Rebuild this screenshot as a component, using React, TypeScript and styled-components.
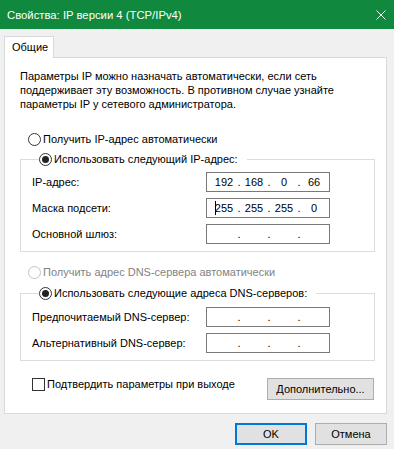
import styled, { createGlobalStyle } from "styled-components";

const GlobalStyle = createGlobalStyle`
  html, body {
    margin: 0;
    padding: 0;
    background: #f0f0f0;
  }
  * {
    box-sizing: border-box;
  }
`;

const FONT = `"Liberation Sans", Arial, sans-serif`;

const Window = styled.div`
  width: 394px;
  height: 449px;
  background: #f0f0f0;
  font-family: ${FONT};
  font-size: 11px;
  color: #000;
  display: flex;
  flex-direction: column;
  overflow: hidden;
`;

const TitleBar = styled.div`
  height: 29px;
  background: #10893e;
  color: #fff;
  display: flex;
  align-items: center;
  justify-content: space-between;
  padding: 0 8px 0 7px;
`;

const Title = styled.span`
  font-size: 11.3px;
  line-height: 14px;
`;

const CloseIcon = styled.svg`
  width: 10px;
  height: 10px;
  display: block;
  margin-top: 1px;
`;

const Body = styled.div`
  padding: 7px 7px 0 4px;
  display: flex;
  flex-direction: column;
`;

const TabStrip = styled.div`
  display: flex;
  position: relative;
  z-index: 1;
  margin-bottom: -1px;
`;

const Tab = styled.div`
  width: 50px;
  height: 22px;
  background: #fff;
  border: 1px solid #d9d9d9;
  border-bottom: none;
  display: flex;
  align-items: center;
  padding-left: 7px;
  padding-bottom: 1px;
`;

const TabPanel = styled.div`
  height: 357px;
  background: #fff;
  border: 1px solid #d9d9d9;
  padding: 11px 11px 13px 15px;
  display: flex;
  flex-direction: column;
`;

const Intro = styled.p`
  margin: 0;
  line-height: 14px;
  white-space: nowrap;
`;

const RadioRow = styled.label<{ $disabled?: boolean; $gap?: number }>`
  display: flex;
  align-items: center;
  height: 14px;
  line-height: 14px;
  margin-top: ${(p) => p.$gap ?? 0}px;
  padding-left: 8px;
  color: ${(p) => (p.$disabled ? "#838383" : "#000")};
  white-space: nowrap;
`;

const Radio = styled.span<{ $checked?: boolean; $disabled?: boolean }>`
  width: 13px;
  height: 13px;
  border-radius: 50%;
  border: 1px solid ${(p) => (p.$disabled ? "#c4c4c4" : "#333")};
  background: #fff;
  margin-right: 2px;
  display: flex;
  align-items: center;
  justify-content: center;
  flex-shrink: 0;

  &::after {
    content: "";
    display: ${(p) => (p.$checked ? "block" : "none")};
    width: 7px;
    height: 7px;
    border-radius: 50%;
    background: #222;
  }
`;

const GroupBox = styled.fieldset<{ $gap: number; $top: number }>`
  margin: ${(p) => p.$gap}px 0 0 0;
  padding: ${(p) => p.$top}px 0 7px 11px;
  border: 1px solid #dcdcdc;
  min-width: 0;
`;

const GroupLegend = styled.legend`
  margin-left: 7px;
  padding: 0 9px 0 0;
  height: 14px;
  line-height: 14px;

  & > ${RadioRow} {
    padding-left: 0;
  }
`;

const FieldGrid = styled.div`
  display: grid;
  grid-template-columns: 174px 124px;
  row-gap: 6px;
  align-items: center;
`;

const FieldLabel = styled.span`
  line-height: 14px;
  white-space: nowrap;
`;

const IpBox = styled.div`
  height: 20px;
  border: 1px solid #7a7a7a;
  background: #fff;
  display: flex;
  align-items: center;
  padding-left: 4px;
  line-height: 14px;
`;

const Octet = styled.span`
  width: 26px;
  text-align: center;
  white-space: nowrap;
`;

const Dot = styled.span`
  width: 4px;
  text-align: center;
`;

const Caret = styled.span`
  display: inline-block;
  width: 1px;
  height: 14px;
  background: #000;
  vertical-align: -3px;
  margin-right: -1px;
`;

const FooterRow = styled.div`
  margin-top: 16px;
  display: flex;
  justify-content: space-between;
  align-items: flex-start;
  padding-left: 12px;
  padding-right: 1px;
`;

const CheckRow = styled.label`
  display: flex;
  align-items: center;
  height: 14px;
  line-height: 14px;
  white-space: nowrap;
`;

const CheckBox = styled.span`
  width: 13px;
  height: 13px;
  border: 1px solid #333;
  background: #fff;
  margin-right: 2px;
  flex-shrink: 0;
`;

const PushButton = styled.button<{ $primary?: boolean; $width: number }>`
  width: ${(p) => p.$width}px;
  height: 22px;
  margin-top: ${(p) => (p.$primary === undefined ? 1 : 0)}px;
  background: #e1e1e1;
  border: ${(p) => (p.$primary ? "2px solid #0078d7" : "1px solid #adadad")};
  font-family: ${FONT};
  font-size: 11px;
  color: #000;
  padding: 0;
  line-height: 14px;
  white-space: nowrap;
`;

const DialogButtons = styled.div`
  display: flex;
  justify-content: flex-end;
  gap: 8px;
  margin-top: 9px;
`;

const IpField = ({ value, caret }: { value?: string[]; caret?: boolean }) => {
  const parts = value ?? ["", "", "", ""];
  return (
    <IpBox>
      {parts.map((part, i) => (
        <span key={i} style={{ display: "contents" }}>
          <Octet>
            {caret && i === 0 ? <Caret /> : null}
            {part}
          </Octet>
          {i < 3 ? <Dot>.</Dot> : null}
        </span>
      ))}
    </IpBox>
  );
};

export default function App() {
  return (
    <>
      <GlobalStyle />
      <Window>
        <TitleBar>
          <Title>Свойства: IP версии 4 (TCP/IPv4)</Title>
          <CloseIcon viewBox="0 0 10 10">
            <path d="M0.5 0.5 L9.5 9.5 M9.5 0.5 L0.5 9.5" stroke="#fff" strokeWidth="1" />
          </CloseIcon>
        </TitleBar>
        <Body>
          <TabStrip>
            <Tab>Общие</Tab>
          </TabStrip>
          <TabPanel>
            <Intro>
              Параметры IP можно назначать автоматически, если сеть
              <br />
              поддерживает эту возможность. В противном случае узнайте
              <br />
              параметры IP у сетевого администратора.
            </Intro>

            <RadioRow $gap={21}>
              <Radio />
              Получить IP-адрес автоматически
            </RadioRow>

            <GroupBox $gap={6} $top={6}>
              <GroupLegend>
                <RadioRow>
                  <Radio $checked />
                  Использовать следующий IP-адрес:
                </RadioRow>
              </GroupLegend>
              <FieldGrid>
                <FieldLabel>IP-адрес:</FieldLabel>
                <IpField value={["192", "168", "0", "66"]} />
                <FieldLabel>Маска подсети:</FieldLabel>
                <IpField value={["255", "255", "255", "0"]} caret />
                <FieldLabel>Основной шлюз:</FieldLabel>
                <IpField />
              </FieldGrid>
            </GroupBox>

            <RadioRow $gap={13} $disabled>
              <Radio $disabled />
              Получить адрес DNS-сервера автоматически
            </RadioRow>

            <GroupBox $gap={7} $top={7}>
              <GroupLegend>
                <RadioRow>
                  <Radio $checked />
                  Использовать следующие адреса DNS-серверов:
                </RadioRow>
              </GroupLegend>
              <FieldGrid>
                <FieldLabel>Предпочитаемый DNS-сервер:</FieldLabel>
                <IpField />
                <FieldLabel>Альтернативный DNS-сервер:</FieldLabel>
                <IpField />
              </FieldGrid>
            </GroupBox>

            <FooterRow>
              <CheckRow>
                <CheckBox />
                Подтвердить параметры при выходе
              </CheckRow>
              <PushButton $width={107}>Дополнительно...</PushButton>
            </FooterRow>
          </TabPanel>
          <DialogButtons>
            <PushButton $primary $width={72}>
              OK
            </PushButton>
            <PushButton $primary={false} $width={72}>
              Отмена
            </PushButton>
          </DialogButtons>
        </Body>
      </Window>
    </>
  );
}
